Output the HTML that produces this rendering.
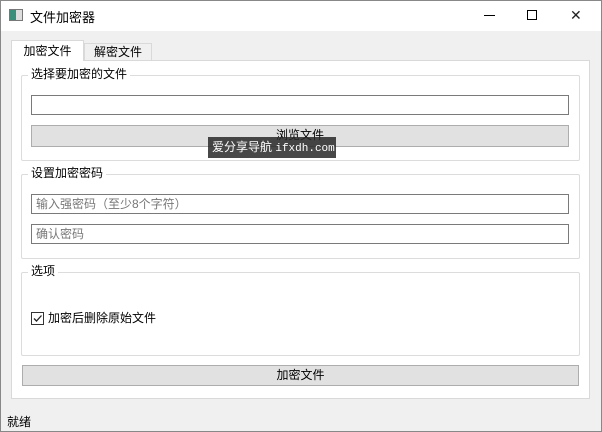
<!DOCTYPE html><html><head><meta charset="utf-8"><style>
body{margin:0;width:602px;height:432px;background:#f0f0f0;font-family:"Liberation Sans","Noto Sans CJK SC",sans-serif;font-size:12px;color:#000;position:relative;overflow:hidden}
.a{position:absolute;box-sizing:border-box}
.win{left:0;top:0;width:602px;height:432px;border:1px solid #888}
.gb{border:1px solid #dcdcdc;border-radius:2px}
.gt{background:#fff;padding:0 3px;line-height:14px}
.in{background:#fff;border:1px solid #7a7a7a}
.btn{background:#e1e1e1;border:1px solid #adadad;text-align:center;line-height:19px}
.ph{color:#777;padding-left:4px;line-height:18px}
</style></head><body>
<div class="a win"></div>
<div class="a" style="left:1px;top:1px;width:600px;height:30px;background:#fff"></div>
<div class="a" style="left:9px;top:9px;width:14px;height:12px;border:1px solid #777;background:#ddd"><div style="width:6px;height:10px;background:#3a8f7a"></div></div>
<div class="a" style="left:30px;top:7px;font-size:13px">文件加密器</div>
<div class="a" style="left:484px;top:15px;width:11px;height:1px;background:#000"></div>
<div class="a" style="left:527px;top:10px;width:10px;height:10px;border:1px solid #000"></div>
<div class="a" style="left:570px;top:7px;font-size:14px;line-height:16px;color:#222">✕</div>
<div class="a" style="left:11px;top:60px;width:579px;height:339px;background:#fff;border:1px solid #d9d9d9"></div>
<div class="a" style="left:11px;top:40px;width:73px;height:21px;background:#fff;border:1px solid #d9d9d9;border-bottom:none;text-align:center;line-height:20px">加密文件</div>
<div class="a" style="left:84px;top:43px;width:68px;height:17px;background:#f0f0f0;border:1px solid #d9d9d9;border-bottom:none;text-align:center;line-height:17px">解密文件</div>

<div class="a gb" style="left:21px;top:75px;width:559px;height:86px"></div>
<div class="a gt" style="left:28px;top:67px">选择要加密的文件</div>
<div class="a in" style="left:31px;top:95px;width:538px;height:20px"></div>
<div class="a btn" style="left:31px;top:125px;width:538px;height:22px">浏览文件</div>

<div class="a gb" style="left:21px;top:174px;width:559px;height:85px"></div>
<div class="a gt" style="left:28px;top:166px">设置加密密码</div>
<div class="a in ph" style="left:31px;top:194px;width:538px;height:20px">输入强密码（至少8个字符）</div>
<div class="a in ph" style="left:31px;top:224px;width:538px;height:20px">确认密码</div>

<div class="a gb" style="left:21px;top:272px;width:559px;height:84px"></div>
<div class="a gt" style="left:28px;top:264px">选项</div>
<div class="a" style="left:31px;top:312px;width:13px;height:13px;border:1px solid #333;background:#fff"><svg width="11" height="11" style="display:block"><path d="M2 5.5L4.5 8L9.5 2.5" fill="none" stroke="#222" stroke-width="1.3"/></svg></div>
<div class="a" style="left:48px;top:311px;line-height:14px">加密后删除原始文件</div>

<div class="a btn" style="left:22px;top:365px;width:557px;height:21px">加密文件</div>
<div class="a" style="left:7px;top:413px">就绪</div>
<div class="a" style="left:208px;top:137px;width:128px;height:21px;background:rgba(40,40,40,.85);color:#fff;line-height:21px;padding-left:4px;white-space:nowrap;overflow:hidden">爱分享导航 <span style="font-family:'Liberation Mono',monospace;font-size:11px">ifxdh.com</span></div>
</body></html>
